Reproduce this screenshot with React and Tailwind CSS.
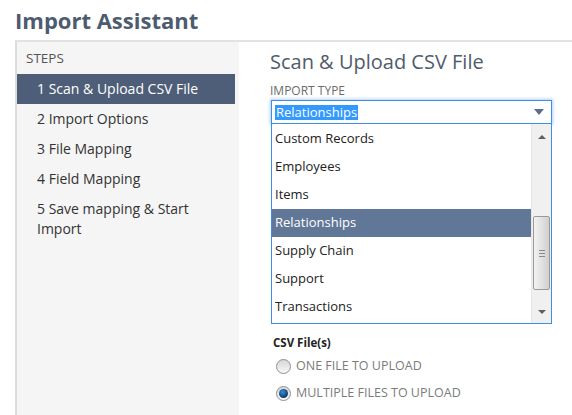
import React from 'react';

const steps = [
  { n: 1, label: 'Scan & Upload CSV File' },
  { n: 2, label: 'Import Options' },
  { n: 3, label: 'File Mapping' },
  { n: 4, label: 'Field Mapping' },
  { n: 5, label: 'Save mapping & Start Import' },
];

const importTypes = [
  'Custom Records',
  'Employees',
  'Items',
  'Relationships',
  'Supply Chain',
  'Support',
  'Transactions',
];

function Radio({ checked, label }) {
  return (
    <label className="flex items-center h-[27px]">
      <span
        className="relative w-[15px] h-[15px] rounded-full border border-[#8e8f8f] bg-gradient-to-b from-[#d6d6d6] to-[#f8f8f8] flex items-center justify-center"
      >
        {checked && (
          <span className="w-[9px] h-[9px] rounded-full bg-[radial-gradient(circle_at_40%_35%,#3a8fd8,#0b3a66_70%)]" />
        )}
      </span>
      <span className="ml-[5px] text-[12.5px] text-[#7b7b7b] uppercase">{label}</span>
    </label>
  );
}

function Scrollbar() {
  return (
    <div className="w-[20px] bg-[#f0f0f0] flex flex-col items-center border-l border-[#e6e6e6]">
      <div className="h-[26px] flex items-center justify-center">
        <span className="w-0 h-0 border-l-[4px] border-r-[4px] border-b-[4px] border-l-transparent border-r-transparent border-b-[#606060]" />
      </div>
      <div className="flex-1 w-full relative">
        <div className="absolute left-[1px] right-[1px] top-[66px] h-[74px] rounded-[2px] border border-[#9a9a9a] bg-gradient-to-r from-[#f2f2f2] via-[#e2e2e2] to-[#cfcfcf] flex flex-col items-center justify-center gap-[2px]">
          <span className="block w-[6px] h-px bg-[#8a8a8a]" />
          <span className="block w-[6px] h-px bg-[#8a8a8a]" />
          <span className="block w-[6px] h-px bg-[#8a8a8a]" />
        </div>
      </div>
      <div className="h-[22px] flex items-center justify-center">
        <span className="w-0 h-0 border-l-[4px] border-r-[4px] border-t-[4px] border-l-transparent border-r-transparent border-t-[#606060]" />
      </div>
    </div>
  );
}

export default function App() {
  const current = 1;
  const selected = 'Relationships';

  return (
    <div className="w-[572px] h-[415px] overflow-hidden bg-white pl-[15px] font-['Open_Sans',sans-serif]">
      <h1 className="h-[40px] pt-[5px] text-[22px] font-bold text-[#4d5b70] leading-[30px]">
        Import Assistant
      </h1>

      <div className="flex border-t-2 border-[#e2e2e2] h-[375px]">
        {/* step list */}
        <div className="w-[224px] bg-[#f5f5f5] border-l-2 border-[#dcdcdc] pr-[4px]">
          <div className="pl-[9px] pt-[6px] h-[32px] text-[13.5px] text-[#555] uppercase">Steps</div>
          <ul>
            {steps.map((s) => (
              <li
                key={s.n}
                className={`pl-[20px] pr-[12px] py-[5px] text-[14px] leading-[20px] ${
                  s.n === current ? 'bg-[#4e5e78] text-white' : 'text-[#333]'
                }`}
              >
                {s.n} {s.label}
              </li>
            ))}
          </ul>
        </div>

        {/* upload form */}
        <div className="flex-1 pl-[31px] pt-[6px]">
          <h2 className="text-[20px] leading-[28px] text-[#505b6b]">Scan &amp; Upload CSV File</h2>
          <div className="mt-[8px] text-[12px] leading-[14px] text-[#6b6b6b] uppercase">Import Type</div>

          <div className="mt-[2px] w-[281px] ml-[1px]">
            <div className="h-[24px] border border-[#3d8ee6] shadow-[0_0_3px_1px_rgba(80,150,230,0.45)] flex items-center pl-[3px] pr-[7px]">
              <span className="bg-[#3399ff] text-white text-[13px] leading-[15px] px-px">{selected}</span>
              <span className="ml-auto w-0 h-0 border-l-[5px] border-r-[5px] border-t-[6px] border-l-transparent border-r-transparent border-t-[#5b6f8c]" />
            </div>
            <div className="h-[200px] border border-t-0 border-[#3d8ee6] flex bg-white">
              <ul className="flex-1 pt-px">
                {importTypes.map((t) => (
                  <li
                    key={t}
                    className={`h-[28px] flex items-center pl-[3px] text-[13px] ${
                      t === selected ? 'bg-[#617797] text-white' : 'text-[#222]'
                    }`}
                  >
                    {t}
                  </li>
                ))}
              </ul>
              <Scrollbar />
            </div>
          </div>

          <div className="mt-[10px] ml-[3px] text-[11.5px] font-bold text-[#222]">CSV File(s)</div>
          <div className="ml-[6px] mt-[2px]">
            <Radio label="One file to upload" />
            <Radio checked label="Multiple files to upload" />
          </div>
        </div>
      </div>
    </div>
  );
}
